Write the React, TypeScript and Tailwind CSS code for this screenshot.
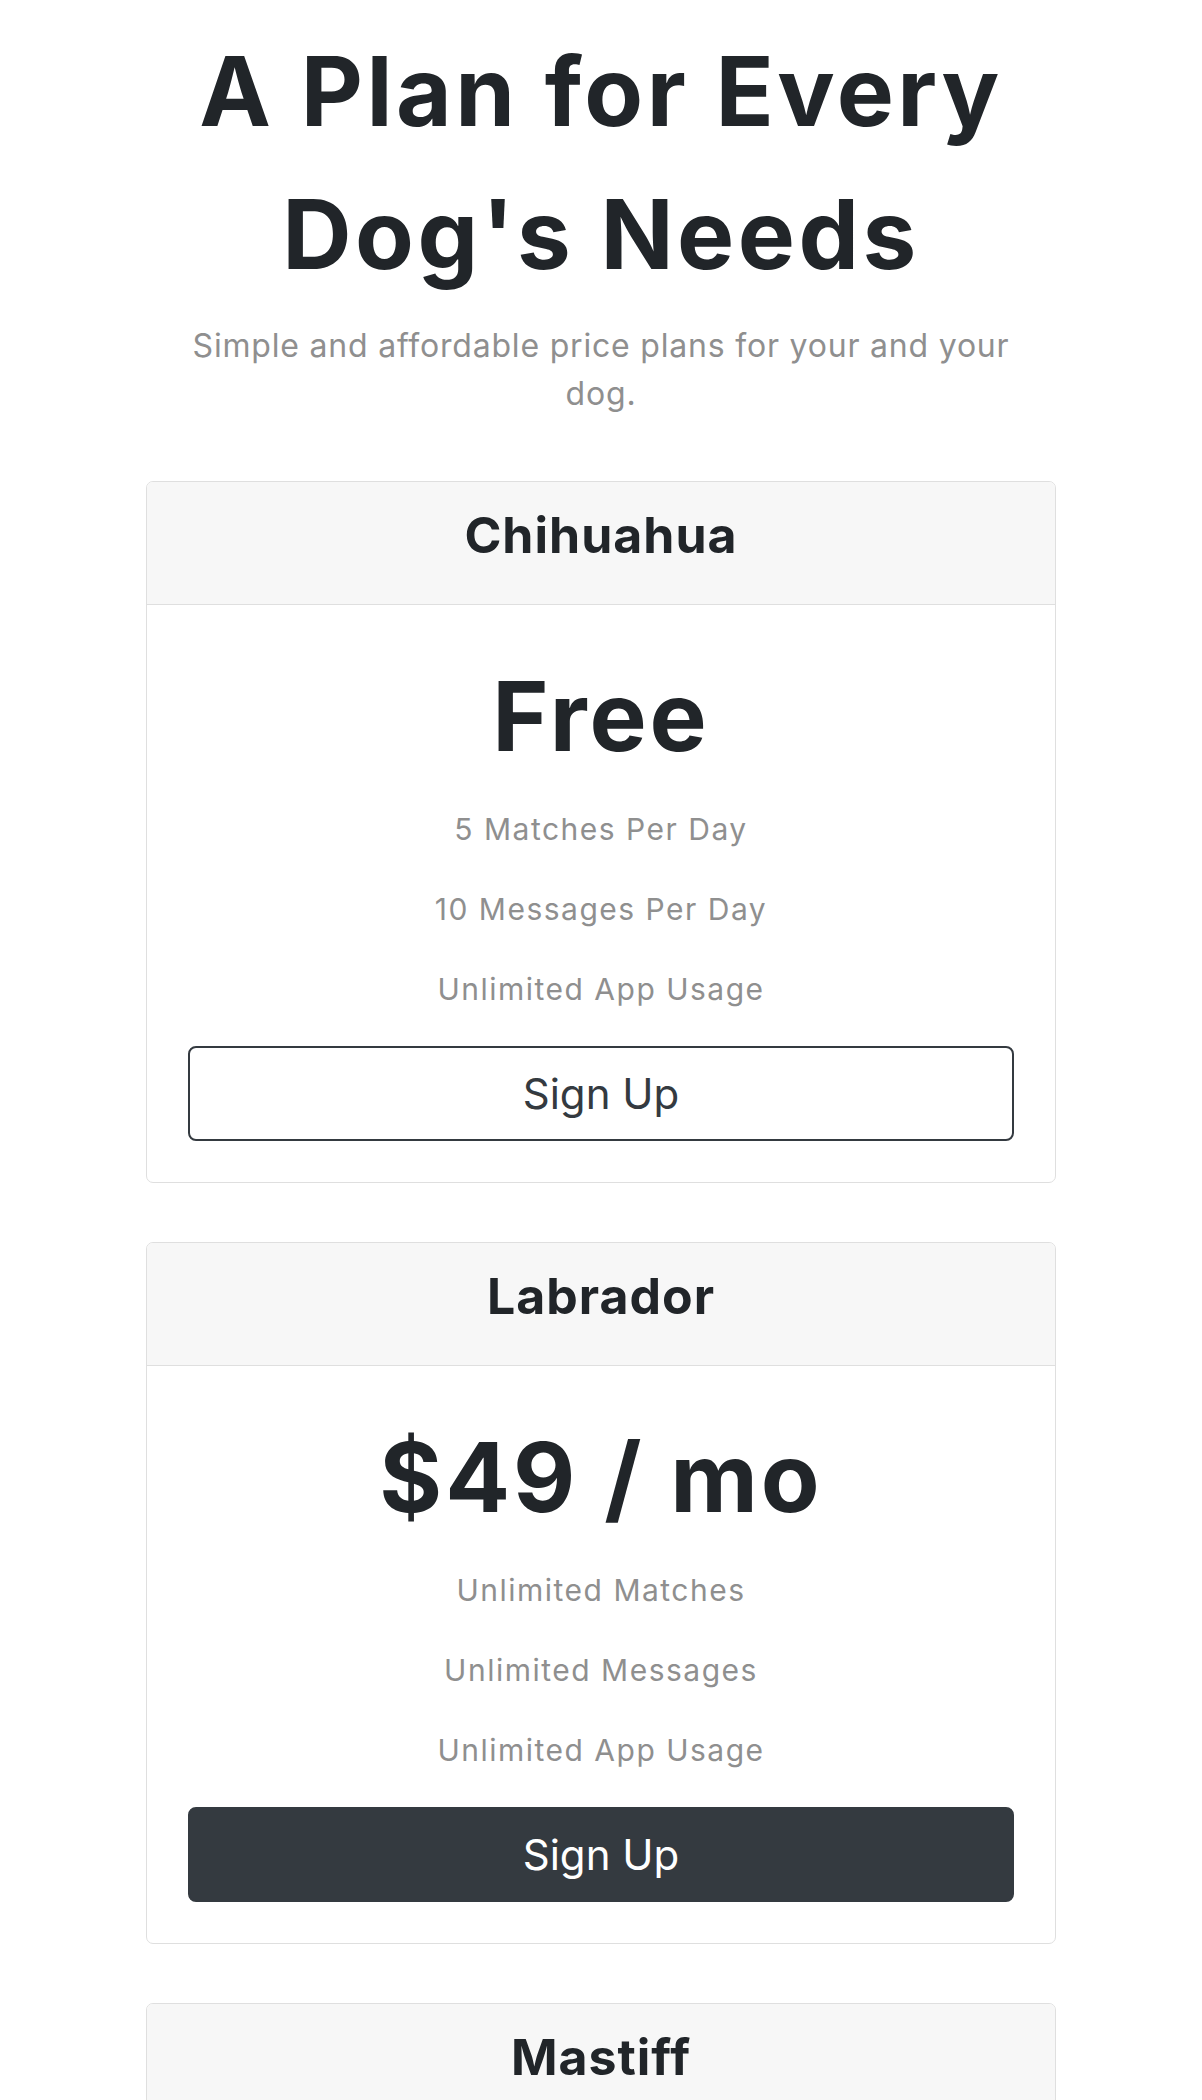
const plans = [
  {
    name: "Chihuahua",
    price: "Free",
    features: ["5 Matches Per Day", "10 Messages Per Day", "Unlimited App Usage"],
    solid: false,
  },
  {
    name: "Labrador",
    price: "$49 / mo",
    features: ["Unlimited Matches", "Unlimited Messages", "Unlimited App Usage"],
    solid: true,
  },
  {
    name: "Mastiff",
    price: "$99 / mo",
    features: ["Pirority Listing", "Unlimited Matches", "Unlimited Messages", "Unlimited App Usage"],
    solid: true,
  },
];

function PlanCard({ plan }: { plan: (typeof plans)[number] }) {
  return (
    <div className="w-full rounded-[7px] border border-[#dfdfdf] bg-white overflow-hidden">
      <div className="bg-[#f7f7f7] border-b border-[#dfdfdf] pt-[23px] pb-[39px] text-center">
        <h3 className="text-[50px] leading-[60px] font-bold tracking-[1px] text-[#212529]">{plan.name}</h3>
      </div>
      <div className="px-[41px] pt-[54px] pb-[41px] flex flex-col items-center">
        <h2 className="text-[96px] leading-[115px] font-bold tracking-[3px] text-[#212529]">{plan.price}</h2>
        <div className="mt-[33px] flex flex-col items-center gap-[35px]">
          {plan.features.map((f) => (
            <p key={f} className="text-[30px] leading-[45px] tracking-[1.5px] text-[#8f8f8f]">
              {f}
            </p>
          ))}
        </div>
        <button
          className={
            plan.solid
              ? "mt-[34px] w-full h-[95px] rounded-[8px] border-2 border-[#343a40] bg-[#343a40] text-white text-[42px]"
              : "mt-[34px] w-full h-[95px] rounded-[8px] border-2 border-[#343a40] bg-white text-[#343a40] text-[42px]"
          }
        >
          Sign Up
        </button>
      </div>
    </div>
  );
}

export default function App() {
  return (
    <div className="min-h-screen bg-white font-[Inter,sans-serif]">
      <section className="mx-auto w-[910px] pt-[20px] pb-[80px] flex flex-col items-center">
        <h1 className="text-center text-[96px] leading-[143px] font-bold tracking-[3.5px] text-[#212529]">
          A Plan for Every Dog's Needs
        </h1>
        <p className="mt-[16px] w-[850px] text-center text-[32px] leading-[48px] tracking-[0.8px] text-[#8f8f8f]">
          Simple and affordable price plans for your and your dog.
        </p>
        <div className="mt-[63px] w-full flex flex-col gap-[59px]">
          {plans.map((p) => (
            <PlanCard key={p.name} plan={p} />
          ))}
        </div>
      </section>
    </div>
  );
}
